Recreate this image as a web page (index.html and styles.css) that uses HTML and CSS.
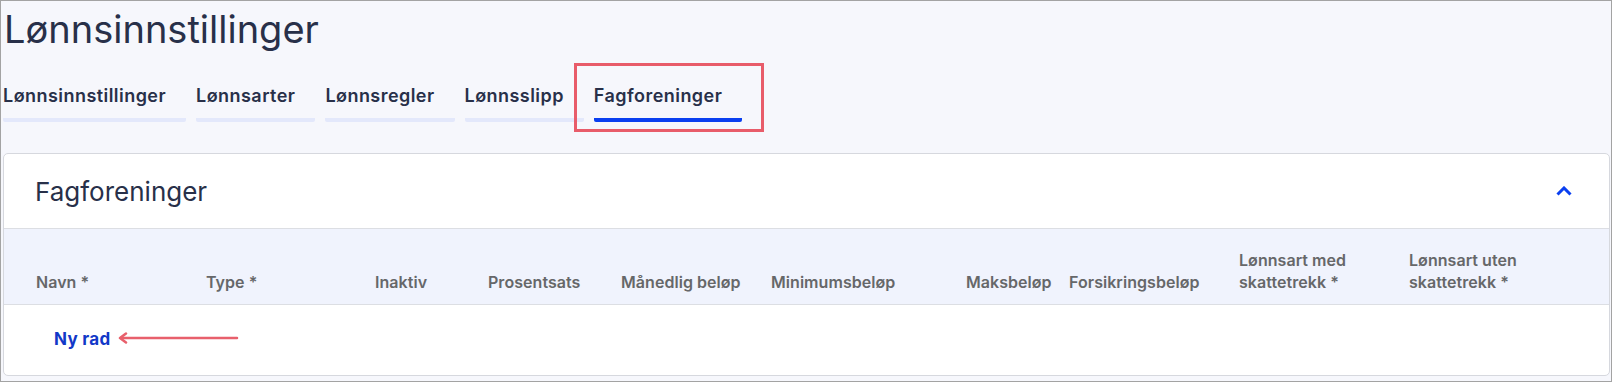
FILE: index.html
```
<!DOCTYPE html>
<html lang="no">
<head>
    <meta charset="utf-8" />
    <title>Lønnsinnstillinger</title>
    <link rel="stylesheet" href="styles.css">
</head>
<body>
    <div class="page">
        <h1 class="page_title">Lønnsinnstillinger</h1>

        <div class="tabs">
            <a class="tab">Lønnsinnstillinger</a>
            <a class="tab">Lønnsarter</a>
            <a class="tab">Lønnsregler</a>
            <a class="tab">Lønnsslipp</a>
            <a class="tab tab_active">Fagforeninger<span class="mark_box"></span></a>
        </div>

        <div class="card">
            <div class="card_head">
                <h2 class="card_title">Fagforeninger</h2>
                <svg class="chevron" width="16" height="10" viewBox="0 0 16 10">
                    <path d="M1.5 8.5 L8 2 L14.5 8.5" fill="none" stroke="#0a3ff0" stroke-width="3" />
                </svg>
            </div>

            <div class="grid grid_head">
                <div>Navn *</div>
                <div>Type *</div>
                <div>Inaktiv</div>
                <div>Prosentsats</div>
                <div>Månedlig beløp</div>
                <div>Minimumsbeløp</div>
                <div>Maksbeløp</div>
                <div>Forsikringsbeløp</div>
                <div>Lønnsart med<br />skattetrekk *</div>
                <div>Lønnsart uten<br />skattetrekk *</div>
            </div>

            <div class="row_new">
                <a class="new_link">Ny rad</a>
                <svg class="mark_arrow" width="122" height="12" viewBox="0 0 122 12">
                    <path d="M120 6 H4" stroke="#e8606c" stroke-width="2.5" stroke-linecap="round" />
                    <path d="M9 1.5 L3 6 L9 10.5" fill="none" stroke="#e8606c" stroke-width="2.5" stroke-linecap="round" stroke-linejoin="round" />
                </svg>
            </div>
        </div>
    </div>
</body>
</html>
```

FILE: styles.css
```
*
{
    margin: 0;
    padding: 0;
    box-sizing: border-box;
}

body
{
    font-family: Inter, 'Noto Sans', sans-serif;
    color: #283049;
}

.page
{
    width: 1612px;
    height: 382px;
    border: 1px solid #a3a3a3;
    background: #f6f7fc;
    padding: 0 1px 0 2px;
}

.page_title
{
    margin-top: 6px;
    padding-left: 1px;
    font-size: 38px;
    line-height: 44px;
    font-weight: 400;
    color: #283049;
}

.tabs
{
    display: flex;
    gap: 10px;
    margin-top: 34px;
}

    .tabs .tab
    {
        position: relative;
        padding: 0 20px 11px 0;
        font-size: 18px;
        line-height: 22px;
        font-weight: 600;
        letter-spacing: 0.45px;
        color: #283049;
        border-bottom: 4px solid #e3e8fb;
        border-radius: 0 0 2px 2px;
    }

    .tabs .tab_active
    {
        border-bottom-color: #0a3ff0;
    }

.mark_box
{
    position: absolute;
    left: -20px;
    right: -22px;
    top: -22px;
    bottom: -14px;
    border: 3px solid #e85c6a;
}

.card
{
    margin-top: 31px;
    background: #fff;
    border: 1px solid #d6d8de;
    border-radius: 5px;
    overflow: hidden;
}

.card_head
{
    display: flex;
    align-items: center;
    justify-content: space-between;
    height: 75px;
    padding: 0 37px 0 31px;
    border-bottom: 1px solid #dcdee3;
}

.card_title
{
    font-size: 26px;
    line-height: 30px;
    font-weight: 400;
    margin-top: 2px;
}

.chevron
{
    display: block;
}

.grid
{
    display: grid;
    grid-template-columns: 170px 169px 113px 133px 150px 195px 103px 170px 170px 1fr;
    padding-left: 32px;
}

.grid_head
{
    height: 76px;
    align-items: end;
    padding-bottom: 11px;
    background: #f0f3fd;
    border-bottom: 1px solid #dcdee3;
    font-size: 16px;
    line-height: 22px;
    font-weight: 600;
    letter-spacing: 0.05px;
    color: #666769;
}

.row_new
{
    display: flex;
    align-items: center;
    height: 70px;
    padding: 0 0 2px 50px;
}

.new_link
{
    font-size: 17px;
    font-weight: 700;
    letter-spacing: 0.3px;
    color: #1238c8;
}

.mark_arrow
{
    display: block;
    margin-left: 7px;
    margin-top: -2px;
}
```
